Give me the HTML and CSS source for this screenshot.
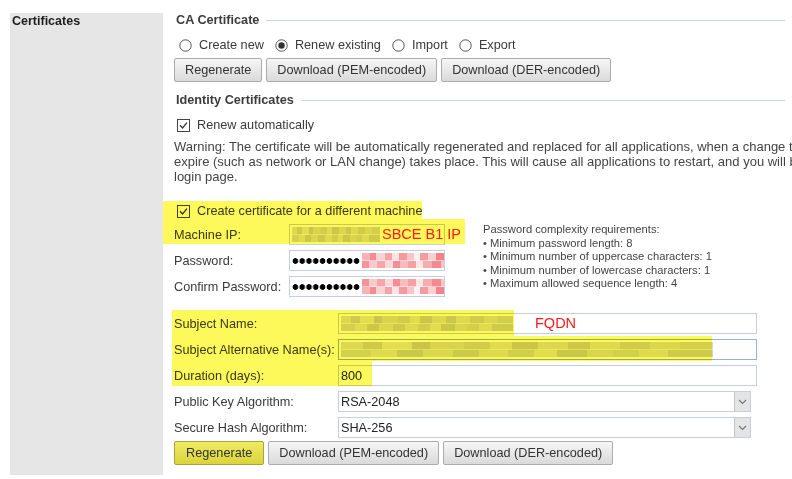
FILE: index.html
```html
<!DOCTYPE html>
<html lang="en">
<head>
  <meta charset="UTF-8" />
  <title>Certificates</title>
  <link rel="stylesheet" href="styles.css">
</head>
<body>
  <div class="page">
    <div class="side">
      <h2>Certificates</h2>
    </div>

    <div class="main">
      <div class="legend first">CA Certificate</div>

      <div class="radios">
        <span class="opt">
          <svg width="13" height="13" viewBox="0 0 13 13"><circle cx="6.5" cy="6.5" r="5.7" fill="#fff" stroke="#555" stroke-width="1"/></svg>
          Create new
        </span>
        <span class="opt">
          <svg width="13" height="13" viewBox="0 0 13 13"><circle cx="6.5" cy="6.5" r="5.7" fill="#fff" stroke="#555" stroke-width="1"/><circle cx="6.5" cy="6.5" r="3.2" fill="#333"/></svg>
          Renew existing
        </span>
        <span class="opt">
          <svg width="13" height="13" viewBox="0 0 13 13"><circle cx="6.5" cy="6.5" r="5.7" fill="#fff" stroke="#555" stroke-width="1"/></svg>
          Import
        </span>
        <span class="opt">
          <svg width="13" height="13" viewBox="0 0 13 13"><circle cx="6.5" cy="6.5" r="5.7" fill="#fff" stroke="#555" stroke-width="1"/></svg>
          Export
        </span>
      </div>

      <div class="buttons">
        <button class="btn">Regenerate</button>
        <button class="btn">Download (PEM-encoded)</button>
        <button class="btn">Download (DER-encoded)</button>
      </div>

      <div class="legend">Identity Certificates</div>

      <div class="check renew">
        <svg width="13" height="13" viewBox="0 0 13 13"><rect x="0.5" y="0.5" width="12" height="12" fill="#fff" stroke="#444"/><path d="M3 6.3 L5.5 9 L10 3.6" fill="none" stroke="#333" stroke-width="1.3"/></svg>
        Renew automatically
      </div>

      <p class="warning">
        Warning: The certificate will be automatically regenerated and replaced for all applications, when a change that causes the certificate to<br>
        expire (such as network or LAN change) takes place. This will cause all applications to restart, and you will be redirected to the<br>
        login page.
      </p>

      <div class="machine">
        <div class="machine-form">
          <div class="check">
            <svg width="13" height="13" viewBox="0 0 13 13"><rect x="0.5" y="0.5" width="12" height="12" fill="#fff" stroke="#444"/><path d="M3 6.3 L5.5 9 L10 3.6" fill="none" stroke="#333" stroke-width="1.3"/></svg>
            Create certificate for a different machine
          </div>
          <div class="field">
            <span class="lbl">Machine IP:</span>
            <span class="input short"><span class="mosaic gray ip"></span></span>
          </div>
          <div class="field">
            <span class="lbl">Password:</span>
            <span class="input short"><span class="dots"></span><span class="mosaic pink"></span></span>
          </div>
          <div class="field">
            <span class="lbl">Confirm Password:</span>
            <span class="input short"><span class="dots"></span><span class="mosaic pink alt"></span></span>
          </div>
        </div>

        <div class="complexity">
          Password complexity requirements:<br>
          &bull; Minimum password length: 8<br>
          &bull; Minimum number of uppercase characters: 1<br>
          &bull; Minimum number of lowercase characters: 1<br>
          &bull; Maximum allowed sequence length: 4
        </div>

        <div class="hl hl-m1"></div>
        <div class="hl hl-m2"></div>
        <span class="note note-ip">SBCE B1 IP</span>
      </div>

      <div class="subject">
        <div class="field">
          <span class="lbl">Subject Name:</span>
          <span class="input wide"><span class="mosaic gray sn"></span></span>
        </div>
        <div class="field">
          <span class="lbl">Subject Alternative Name(s):</span>
          <span class="input wide focus"><span class="mosaic gray san"></span></span>
        </div>
        <div class="field">
          <span class="lbl">Duration (days):</span>
          <span class="input wide">800</span>
        </div>
        <div class="field">
          <span class="lbl">Public Key Algorithm:</span>
          <span class="input select">RSA-2048
            <span class="arrow"><svg width="9" height="6" viewBox="0 0 9 6"><path d="M1 1 L4.5 4.5 L8 1" fill="none" stroke="#777" stroke-width="1.2"/></svg></span>
          </span>
        </div>
        <div class="field">
          <span class="lbl">Secure Hash Algorithm:</span>
          <span class="input select">SHA-256
            <span class="arrow"><svg width="9" height="6" viewBox="0 0 9 6"><path d="M1 1 L4.5 4.5 L8 1" fill="none" stroke="#777" stroke-width="1.2"/></svg></span>
          </span>
        </div>

        <div class="hl hl-s1"></div>
        <div class="hl hl-s2"></div>
        <div class="hl hl-s3"></div>
        <span class="note note-fqdn">FQDN</span>
      </div>

      <div class="buttons bottom">
        <button class="btn primary">Regenerate</button>
        <button class="btn">Download (PEM-encoded)</button>
        <button class="btn">Download (DER-encoded)</button>
      </div>
    </div>
  </div>
</body>
</html>
```

FILE: styles.css
```css
* {
  box-sizing: border-box;
}
html, body {
  margin: 0;
  background: #fff;
  overflow: hidden;
}
body {
  width: 792px;
  height: 479px;
  font-family: "Liberation Sans", Arial, sans-serif;
  font-size: 12.7px;
  color: #3a3a3a;
}
.page {
  display: flex;
  align-items: flex-start;
}

/* left column */
.side {
  width: 153px;
  height: 462px;
  margin: 13px 0 0 10px;
  background: #e6e6e6;
  flex-shrink: 0;
}
.side h2 {
  margin: 0;
  padding: 1px 2px;
  font-size: 12.5px;
  line-height: 14px;
  font-weight: bold;
  color: #1e1e1e;
}

/* right column */
.main {
  flex: 1;
  min-width: 0;
  padding-left: 11px;
}
.legend {
  display: flex;
  align-items: center;
  height: 14px;
  margin-top: 11px;
  padding-left: 2px;
  font-weight: bold;
  color: #3c3c3c;
}
.legend.first {
  margin-top: 13px;
}
.legend::after {
  content: "";
  flex: 1;
  border-top: 1px solid #c9d6e7;
  margin: 0 7px;
}

.radios {
  display: flex;
  align-items: center;
  height: 16px;
  margin-top: 10px;
  padding-left: 5px;
}
.opt {
  display: flex;
  align-items: center;
  gap: 7px;
  margin-right: 11px;
}

.buttons {
  display: flex;
  gap: 4px;
  margin-top: 5px;
}
.buttons.bottom {
  margin-top: 3px;
}
.btn {
  height: 24px;
  padding: 0 10px;
  border: 1px solid #ababab;
  border-radius: 2px;
  background: linear-gradient(#f6f6f6, #dadada);
  font: inherit;
  color: #333;
}
.btn.primary {
  padding: 0 11px;
  background: linear-gradient(#efeb62, #d9d43c);
  border-color: #a9a43a;
}

.check {
  display: flex;
  align-items: center;
  gap: 7px;
  height: 16px;
  padding-left: 3px;
}
.check.renew {
  margin-top: 10px;
}
.warning {
  margin: 6px 0 0;
  font-size: 13px;
  line-height: 15px;
  white-space: nowrap;
  color: #444;
}

/* identity certificate form */
.machine {
  position: relative;
  display: flex;
  margin-top: 19px;
}
.machine-form {
  width: 271px;
}
.field {
  display: flex;
  align-items: center;
  height: 21px;
  margin-top: 5px;
}
.lbl {
  width: 115px;
  flex-shrink: 0;
  color: #3a3a3a;
  white-space: nowrap;
}
.subject {
  position: relative;
  margin-top: 16px;
}
.subject .field:first-child {
  margin-top: 0;
}
.subject .lbl {
  width: 164px;
}

.input {
  display: flex;
  align-items: center;
  height: 21px;
  padding: 0 2px;
  border: 1px solid #c6cee0;
  background: #fff;
  color: #222;
  overflow: hidden;
  white-space: nowrap;
}
.input.short {
  width: 156px;
}
.input.wide {
  width: 419px;
}
.input.focus {
  border-color: #98b2d6;
}
.input.select {
  width: 413px;
  padding-right: 0;
}
.arrow {
  display: flex;
  align-items: center;
  justify-content: center;
  width: 16px;
  height: 19px;
  margin-left: auto;
  background: #e4e4e4;
  border-left: 1px solid #c4c4c4;
}

.dots {
  width: 68px;
  height: 8px;
  flex-shrink: 0;
  background: radial-gradient(circle, #000 2.5px, transparent 3.1px) 0 50% / 6.8px 8px repeat-x;
}
.mosaic {
  height: 15px;
  flex-shrink: 0;
}
.mosaic.gray {
  background:
    linear-gradient(90deg, #dedede 0 6%, #cfcfcf 6% 11%, #e4e4e4 11% 19%, #cacaca 19% 24%, #dadada 24% 33%, #d2d2d2 33% 40%, #e2e2e2 40% 46%, #cccccc 46% 53%, #dddddd 53% 61%, #cdcdcd 61% 67%, #e0e0e0 67% 75%, #d1d1d1 75% 83%, #dcdcdc 83% 91%, #d4d4d4 91% 100%) 0 0 / 100% 50% no-repeat,
    linear-gradient(90deg, #d6d6d6 0 8%, #e1e1e1 8% 15%, #cdcdcd 15% 22%, #dddddd 22% 30%, #cfcfcf 30% 37%, #e0e0e0 37% 45%, #d3d3d3 45% 52%, #e3e3e3 52% 58%, #cbcbcb 58% 66%, #dbdbdb 66% 73%, #d4d4d4 73% 80%, #e1e1e1 80% 88%, #d0d0d0 88% 100%) 0 100% / 100% 50% no-repeat;
}
.mosaic.ip {
  width: 88px;
}
.mosaic.sn {
  width: 172px;
}
.mosaic.san {
  width: 372px;
}
.mosaic.pink {
  width: 90px;
  margin-left: 2px;
  background:
    linear-gradient(90deg, #f7b3b6 0 9%, #f38c91 9% 16%, #fbd2d3 16% 25%, #f6a3a7 25% 33%, #fde3e3 33% 41%, #f4999e 41% 50%, #f9c4c6 50% 58%, #fff2f2 58% 64%, #f59ca0 64% 73%, #fad0d1 73% 82%, #f28388 82% 100%) 0 0 / 100% 50% no-repeat,
    linear-gradient(90deg, #f49499 0 8%, #fac9cb 8% 17%, #f6a6a9 17% 26%, #fbd8d9 26% 34%, #f38f94 34% 42%, #f8bcbe 42% 51%, #f5a0a4 51% 60%, #fde6e6 60% 68%, #f6adb0 68% 78%, #f28a8f 78% 88%, #f9c6c8 88% 100%) 0 100% / 100% 50% no-repeat;
}
.mosaic.pink.alt {
  background-position: 0 100%, 0 0;
}

.complexity {
  margin: 20px 0 0 38px;
  font-size: 11.2px;
  line-height: 13.5px;
  color: #444;
  white-space: nowrap;
}

/* yellow marker highlights and red notes drawn over the form */
.hl {
  position: absolute;
  background: #fdf95a;
  mix-blend-mode: multiply;
}
.hl-m1 {
  left: -11px;
  top: -2px;
  width: 259px;
  height: 18px;
}
.hl-m2 {
  left: -11px;
  top: 16px;
  width: 302px;
  height: 25px;
}
.hl-s1 {
  left: -2px;
  top: -3px;
  width: 342px;
  height: 26px;
}
.hl-s2 {
  left: -2px;
  top: 23px;
  width: 540px;
  height: 25px;
}
.hl-s3 {
  left: -2px;
  top: 48px;
  width: 200px;
  height: 25px;
}
.note {
  position: absolute;
  font-size: 14.5px;
  line-height: 16px;
  color: #ff1a1a;
}
.note-ip {
  left: 208px;
  top: 23px;
}
.note-fqdn {
  left: 361px;
  top: 2px;
}
```
